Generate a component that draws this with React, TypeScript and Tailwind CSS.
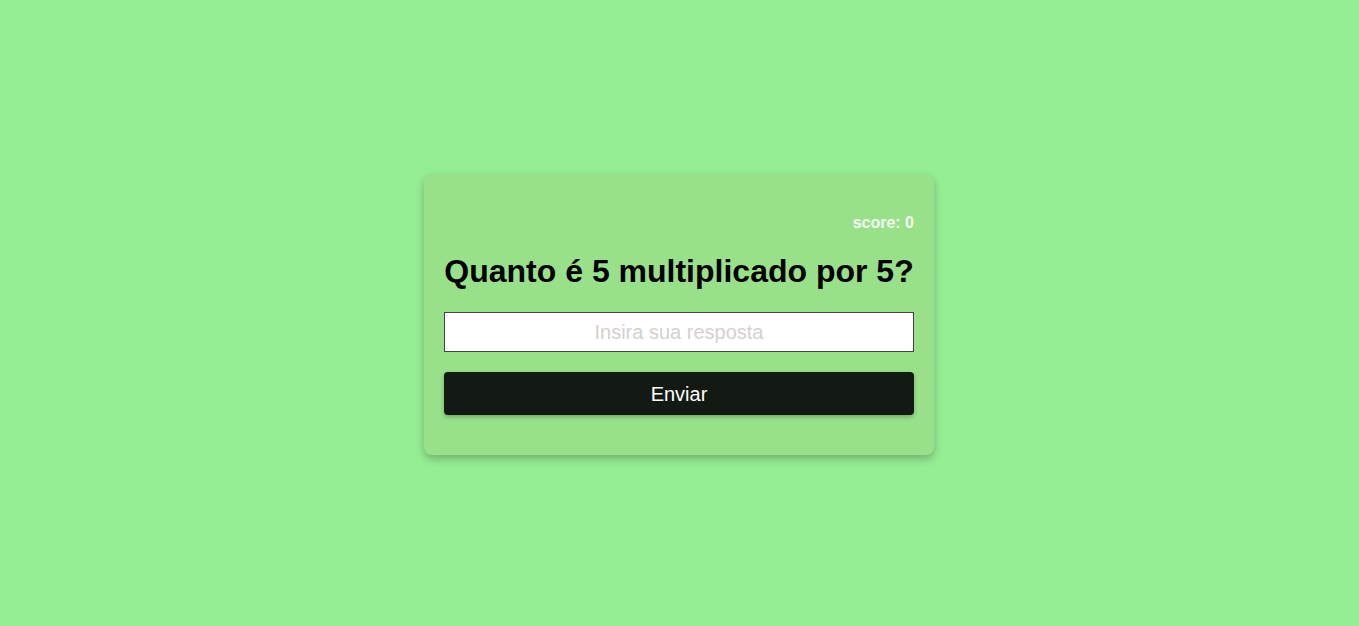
import React, { useState } from "react";

const App = () => {
  const [answer, setAnswer] = useState("");
  const score = 0;

  return (
    <div
      className="min-h-screen w-full flex items-center justify-center bg-[#96ee94] pt-[3px] pr-[1px]"
      style={{ fontFamily: '"Liberation Sans", Arial, sans-serif' }}
    >
      <div className="w-[510px] rounded-lg bg-[#98e08a] p-5 shadow-[0_4px_8px_rgba(0,0,0,0.25)]">
        <div className="mt-[20px] text-right text-base font-bold leading-[18px] text-[#f4fbf2]">
          score: {score}
        </div>
        <h1 className="mt-[21px] text-center text-[32px] font-bold leading-[37px] text-black">
          Quanto é 5 multiplicado por 5?
        </h1>
        <input
          type="text"
          value={answer}
          onChange={(e) => setAnswer(e.target.value)}
          placeholder="Insira sua resposta"
          className="mt-[22px] block h-10 w-full border border-[#444] bg-white text-center text-xl text-black outline-none placeholder:text-[#d4d0d0]"
        />
        <button
          type="button"
          className="mb-5 mt-5 block h-[43px] w-full rounded-[4px] bg-[#131a13] text-xl text-white shadow-[0_2px_4px_rgba(0,0,0,0.25)]"
        >
          Enviar
        </button>
      </div>
    </div>
  );
};

export default App;
